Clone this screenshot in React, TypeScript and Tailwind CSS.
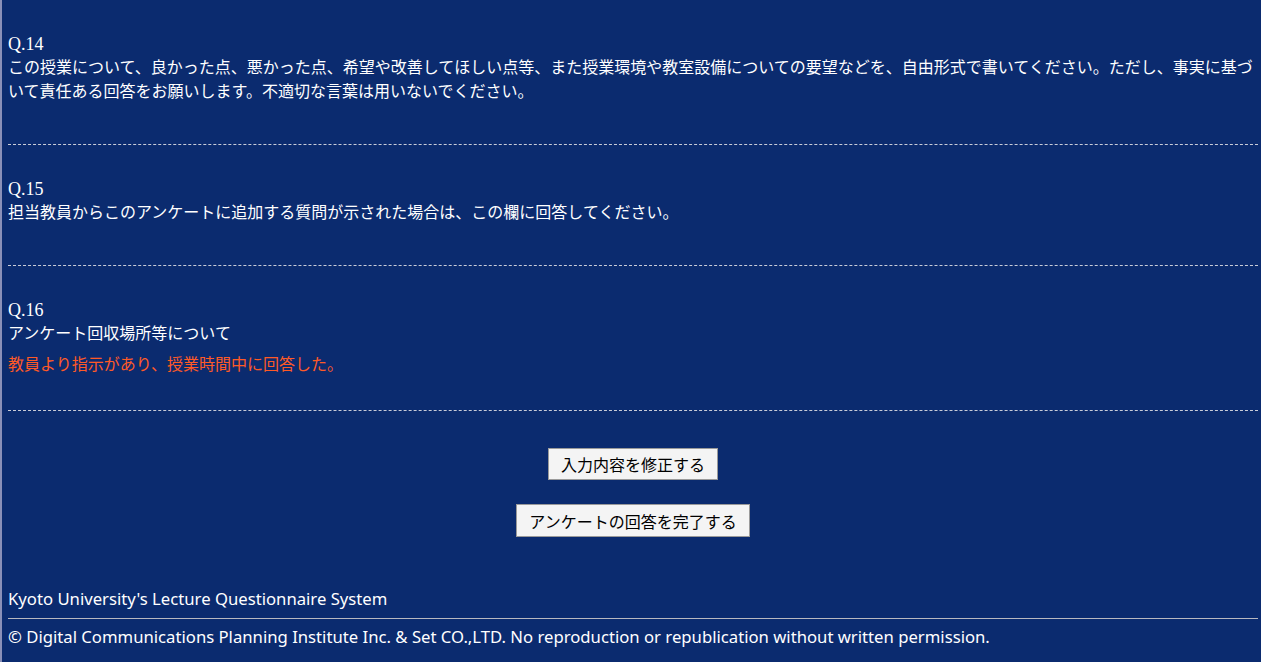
import React from "react";

const jp = { fontFamily: '"Noto Sans CJK JP", "Noto Sans", sans-serif' };

function Question({ num, text, answer }: { num: string; text: string; answer?: string }) {
  return (
    <div>
      <div className="pt-[34px]">
        <div className="leading-5 text-[18px] font-['Liberation_Serif',serif]">{num}</div>
        <div className="leading-6">{text}</div>
        <div className="pt-[7px] leading-6 text-[#ff5a26]">{answer}</div>
      </div>
      <div className="mt-[35px] border-t border-dashed border-[#c9ccd8]" />
    </div>
  );
}

export default function App() {
  return (
    <div className="min-h-[662px] bg-[#0b2b6f] border-l-2 border-[#8a90b8] text-white text-[16px]" style={jp}>
      <div className="pl-[6px] pr-[3px]">
        <Question
          num="Q.14"
          text="この授業について、良かった点、悪かった点、希望や改善してほしい点等、また授業環境や教室設備についての要望などを、自由形式で書いてください。ただし、事実に基づいて責任ある回答をお願いします。不適切な言葉は用いないでください。"
        />
        <Question num="Q.15" text="担当教員からこのアンケートに追加する質問が示された場合は、この欄に回答してください。" />
        <Question num="Q.16" text="アンケート回収場所等について" answer="教員より指示があり、授業時間中に回答した。" />
        <div className="flex flex-col items-center pt-[37px] gap-[24px]">
          <button className="h-[32px] px-[12px] bg-[#f4f4f4] border border-[#9a9a9a] text-black leading-6">入力内容を修正する</button>
          <button className="h-[33px] px-[12px] bg-[#f4f4f4] border border-[#9a9a9a] text-black leading-6">アンケートの回答を完了する</button>
        </div>
        <div className="mt-[50px] leading-6 text-[16.7px] font-['Noto_Sans',sans-serif]">Kyoto University's Lecture Questionnaire System</div>
        <div className="mt-[7px] border-t border-[#b8b8c0]" />
        <div className="mt-[6px] leading-6 text-[16.7px] font-['Noto_Sans',sans-serif]">
          © Digital Communications Planning Institute Inc. &amp; Set CO.,LTD. No reproduction or republication without written permission.
        </div>
      </div>
    </div>
  );
}
